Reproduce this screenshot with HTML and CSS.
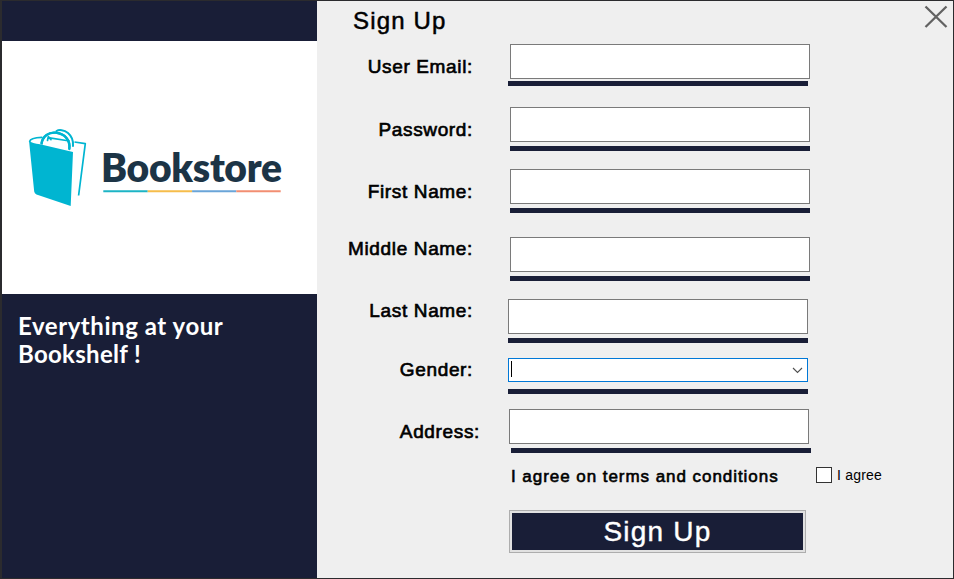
FILE: index.html
```html
<!DOCTYPE html>
<html lang="en">
<head>
<meta charset="utf-8">
<title>Sign Up</title>
<link rel="stylesheet" href="styles.css">
</head>
<body>
<div class="window">
  <aside class="sidebar">
    <div class="logo">
      <svg width="315" height="253" viewBox="2 41 315 253">
        <g fill="none" stroke="#00b5d1" stroke-width="1.7" stroke-linecap="round" stroke-linejoin="round">
          <path d="M29.7 141.5C30.2 138.8 35 137.6 41.8 137.4"/>
          <path d="M48 137.6L69.5 141M74.5 142L85.3 143.6L78.6 195.5" stroke-linecap="butt"/>
          <path d="M47.5 140.5L48.3 136.6L51 139.6"/>
          <path d="M41.5 143C42.5 136 49 131.8 56 132.7C65 134 70.5 140 69.3 149" stroke-width="2.3"/>
          <path d="M56.5 131C59 129.5 64 129.8 68 133C72 136.5 73.5 141 73 146" stroke-width="2"/>
        </g>
        <path fill="#00b5d1" d="M29 140.5C31 143 35 143.5 40 144.3L73 152L70.7 206L36.5 194.5Q34.5 193.7 34.2 191.5Z"/>
        <path d="M41.5 144.5C42.5 136 49 131.8 56 132.7C65 134 70.5 140 69.3 149" fill="none" stroke="#00b5d1" stroke-width="2.3"/>
        <text class="brand" x="101" y="182.3" textLength="181" lengthAdjust="spacing">Bookstore</text>
        <g>
          <path fill="#1db4c5" d="M103.3 190.2h44.4v2h-44.4z"/>
          <path fill="#f6bd4b" d="M147.7 190.2h44.4v2h-44.4z"/>
          <path fill="#6aa5d8" d="M192.1 190.2h44.2v2h-44.2z"/>
          <path fill="#f28e72" d="M236.3 190.2h44.4v2h-44.4z"/>
        </g>
      </svg>
    </div>
    <p class="tagline"><span class="line-one">Everything at your</span><br><span class="line-two">Bookshelf !</span></p>
  </aside>
  <main class="panel">
    <header class="header">
      <h1 class="title">Sign Up</h1>
      <svg class="close" width="24" height="24" viewBox="0 0 24 24"><path d="M1.5 1.5L22.5 22M22.5 1.5L1.5 22" stroke="#626262" stroke-width="2.3" fill="none"/></svg>
    </header>
    <form class="form">
      <div class="row email"><label>User Email:</label><div class="field"><div class="box"></div><div class="bar"></div></div></div>
      <div class="row password"><label>Password:</label><div class="field"><div class="box"></div><div class="bar"></div></div></div>
      <div class="row first"><label>First Name:</label><div class="field"><div class="box"></div><div class="bar"></div></div></div>
      <div class="row middle"><label>Middle Name:</label><div class="field"><div class="box"></div><div class="bar"></div></div></div>
      <div class="row last"><label>Last Name:</label><div class="field"><div class="box"></div><div class="bar"></div></div></div>
      <div class="row gender"><label>Gender:</label><div class="field"><div class="box combo"><span class="caret"></span><svg width="11" height="7" viewBox="0 0 11 7"><path d="M1 1L5.5 5.5L10 1" fill="none" stroke="#505050" stroke-width="1.1"/></svg></div><div class="bar"></div></div></div>
      <div class="row address"><label>Address:</label><div class="field"><div class="box"></div><div class="bar"></div></div></div>
      <div class="terms">
        <span class="terms-text">I agree on terms and conditions</span>
        <span class="check"></span>
        <span class="agree">I agree</span>
      </div>
      <button class="submit" type="button"><span>Sign Up</span></button>
    </form>
  </main>
</div>
</body>
</html>
```
FILE: styles.css
```css
* {
  box-sizing: border-box;
}

body {
  margin: 0;
  font-family: "Liberation Sans", Arial, sans-serif;
  color: #000;
}

.window {
  display: flex;
  width: 954px;
  height: 579px;
  border: 1px solid #2b2b2e;
  border-left-width: 2px;
  background: #efefef;
  overflow: hidden;
}

.sidebar {
  width: 315px;
  padding-top: 40px;
  background: #191e37;
}

.logo {
  height: 253px;
  background: #fff;
}

.logo svg {
  display: block;
}

.brand {
  font: 800 39px Lato, sans-serif;
  fill: #1c3446;
}

.tagline {
  margin: 0;
  padding: 18px 0 0 16px;
  color: #fff;
  font: 700 24px/28px Lato, sans-serif;
  white-space: nowrap;
}

.line-one {
  letter-spacing: 0.55px;
}

.line-two {
  letter-spacing: 0.3px;
}

.panel {
  width: 636px;
}

.header {
  display: flex;
  justify-content: space-between;
  height: 43px;
  padding: 4px 5px 0 36px;
}

.title {
  margin: 0;
  font-size: 24px;
  font-weight: 400;
  line-height: 31px;
  letter-spacing: 1.15px;
  -webkit-text-stroke: 0.5px #000;
}

.row {
  display: flex;
  height: 63px;
}

.row label {
  width: 156px;
  padding-top: 12px;
  font-size: 19px;
  line-height: 22px;
  letter-spacing: 0.65px;
  text-align: right;
  white-space: nowrap;
  -webkit-text-stroke: 0.65px #000;
}

.field {
  margin-left: 37px;
}

.box {
  width: 300px;
  height: 35px;
  border: 1px solid #7a7a7a;
  background: #fff;
}

.bar {
  width: 300px;
  height: 5px;
  margin-top: 4px;
  background: #191e37;
}

.email .bar {
  margin: 2px 0 0 -2px;
}

.password {
  height: 62px;
}

.first {
  height: 68px;
}

.middle {
  height: 62px;
}

.last {
  height: 59px;
}

.gender {
  height: 51px;
}

.address {
  height: 55px;
}

.middle label,
.last label,
.gender label {
  padding-top: 1px;
}

.last .field,
.gender .field {
  margin-left: 35px;
}

.gender .bar {
  margin-top: 7px;
}

.address label {
  width: 163px;
}

.address .field {
  margin-left: 29px;
}

.address .bar {
  margin-left: 2px;
}

.combo {
  display: flex;
  justify-content: space-between;
  height: 24px;
  padding: 2px 4px 0 2px;
  border-color: #0078d7;
}

.combo svg {
  margin-top: 6px;
}

.caret {
  width: 1px;
  height: 16px;
  background: #000;
}

.terms {
  display: flex;
  height: 46px;
  padding-left: 194px;
}

.terms-text {
  width: 305px;
  padding-top: 3px;
  font-size: 17px;
  line-height: 20px;
  letter-spacing: 0.95px;
  white-space: nowrap;
  -webkit-text-stroke: 0.6px #000;
}

.check {
  width: 16px;
  height: 16px;
  margin-top: 3px;
  border: 1px solid #333;
  background: #fff;
}

.agree {
  margin-left: 5px;
  padding-top: 2px;
  font-size: 14px;
  line-height: 18px;
  letter-spacing: 0.2px;
}

.submit {
  display: block;
  width: 297px;
  height: 43px;
  margin-left: 192px;
  padding: 2px;
  border: 1px solid #adadad;
  background: #e1e1e1;
  font-family: inherit;
}

.submit span {
  display: block;
  height: 37px;
  background: #191e37;
  color: #fff;
  font-size: 28px;
  line-height: 37px;
  letter-spacing: 1.2px;
  -webkit-text-stroke: 0.4px #fff;
}
```
